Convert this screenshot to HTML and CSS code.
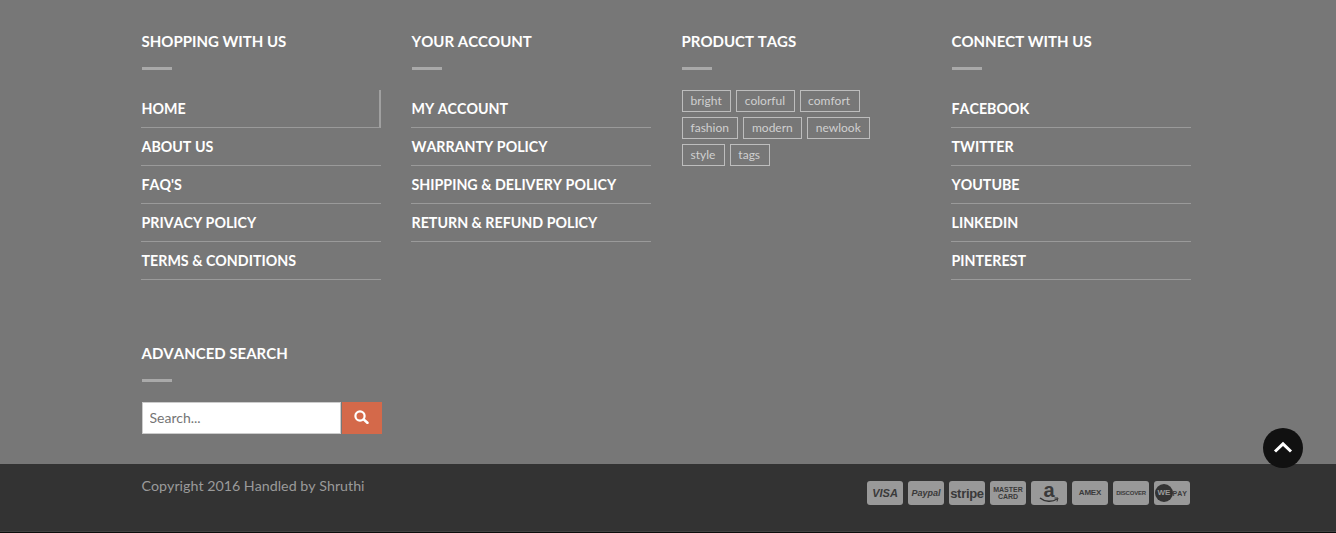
FILE: index.html
```html
<!DOCTYPE html>
<html lang="en">
<head>
<meta charset="utf-8">
<title>Footer</title>
<link rel="stylesheet" href="styles.css">
</head>
<body>
<footer class="footer">
  <div class="footer-main">
    <div class="columns">
      <section class="col">
        <h3 class="title">SHOPPING WITH US</h3>
        <ul class="links">
          <li class="active"><a href="#">HOME</a></li>
          <li><a href="#">ABOUT US</a></li>
          <li><a href="#">FAQ'S</a></li>
          <li><a href="#">PRIVACY POLICY</a></li>
          <li><a href="#">TERMS &amp; CONDITIONS</a></li>
        </ul>
      </section>
      <section class="col">
        <h3 class="title">YOUR ACCOUNT</h3>
        <ul class="links">
          <li><a href="#">MY ACCOUNT</a></li>
          <li><a href="#">WARRANTY POLICY</a></li>
          <li><a href="#">SHIPPING &amp; DELIVERY POLICY</a></li>
          <li><a href="#">RETURN &amp; REFUND POLICY</a></li>
        </ul>
      </section>
      <section class="col">
        <h3 class="title">PRODUCT TAGS</h3>
        <div class="tags">
          <a href="#">bright</a><a href="#">colorful</a><a href="#">comfort</a><a href="#">fashion</a><a href="#">modern</a><a href="#">newlook</a><a href="#">style</a><a href="#">tags</a>
        </div>
      </section>
      <section class="col">
        <h3 class="title">CONNECT WITH US</h3>
        <ul class="links">
          <li><a href="#">FACEBOOK</a></li>
          <li><a href="#">TWITTER</a></li>
          <li><a href="#">YOUTUBE</a></li>
          <li><a href="#">LINKEDIN</a></li>
          <li><a href="#">PINTEREST</a></li>
        </ul>
      </section>
    </div>
    <section class="col search-col">
      <h3 class="title">ADVANCED SEARCH</h3>
      <form class="search">
        <input class="search-input" type="text" placeholder="Search...">
        <button class="search-btn" type="button" aria-label="Search">
          <svg width="15" height="14" viewBox="0 0 15 14"><circle cx="6" cy="6" r="4.600" fill="none" stroke="#fff" stroke-width="2.200"/><path d="M9.600 9.400 L13.400 12.800" stroke="#fff" stroke-width="2.600" stroke-linecap="round"/></svg>
        </button>
      </form>
    </section>
  </div>
  <div class="footer-bottom">
    <p class="copyright">Copyright 2016 Handled by Shruthi</p>
    <div class="pay">
      <span class="card visa">VISA</span>
      <span class="card paypal">Paypal</span>
      <span class="card stripe">stripe</span>
      <span class="card master">MASTER<br>CARD</span>
      <span class="card amazon">a<svg class="smile" width="20" height="6" viewBox="0 0 20 6"><path d="M1 1 C6 5 13 5.500 18 2" fill="none" stroke="#333" stroke-width="1.500"/><path d="M15.500 1 L19 1 L18 4.500" fill="none" stroke="#333" stroke-width="1"/></svg></span>
      <span class="card amex">AMEX</span>
      <span class="card discover">DISCOVER</span>
      <span class="card wepay"><b class="we">WE</b>PAY</span>
    </div>
  </div>
</footer>
<a class="to-top" href="#" aria-label="Back to top">
  <svg width="20" height="12" viewBox="0 0 20 12"><path d="M2 10.500 L10 2.800 L18 10.500" fill="none" stroke="#fff" stroke-width="3"/></svg>
</a>
</body>
</html>
```
FILE: styles.css
```css
* { box-sizing: border-box; }
html, body { margin: 0; padding: 0; }
body {
  background: #777;
  font-family: Lato, "Liberation Sans", sans-serif;
  font-kerning: none;
  height: 533px;
  overflow: hidden;
}
a { color: inherit; text-decoration: none; }
.footer-main { padding: 32px 0 30px 141px; height: 464px; }
.columns { display: grid; grid-template-columns: repeat(4, 240px); column-gap: 30px; height: 280px; }
.col { width: 240px; }
.title {
  margin: 0 0 20px;
  height: 38px;
  padding-left: 0.5px;
  font-size: 15px;
  line-height: 18px;
  font-weight: 700;
  color: #fff;
  position: relative;
}
.title::after {
  content: "";
  position: absolute;
  left: 1px;
  top: 35px;
  width: 30px;
  height: 3px;
  background: #a9a9a9;
}
.links { list-style: none; margin: 0; padding: 0; }
.links li {
  height: 38px;
  padding-left: 0.5px;
  line-height: 38px;
  font-size: 14.25px;
  font-weight: 700;
  color: #fff;
  border-bottom: 1px solid #9a9a9a;
}
.links li.active { border-right: 2px solid #a0a0a0; }
.tags { display: flex; flex-wrap: wrap; gap: 5px; padding-left: 1px; width: 230px; }
.tags a {
  height: 22px;
  line-height: 20px;
  padding: 0 8.5px 0 7.5px;
  border: 1px solid #bdbdbd;
  color: #d0d0d0;
  font-size: 12px;
}
.search-col { margin-top: 32px; }
.search { display: flex; padding-left: 1px; height: 32px; width: 241px; }
.search-input {
  flex: none;
  width: 199px;
  height: 32px;
  border: 1px solid #ccc;
  background: #fff;
  padding: 0 7px 2px 6.5px;
  font: 14px Lato, "Liberation Sans", sans-serif;
  color: #666;
  outline: none;
}
.search-input::placeholder { color: #757575; opacity: 1; }
.search-btn {
  flex: none;
  margin-left: 1px;
  width: 40px;
  height: 32px;
  border: 0;
  padding: 0 1px 2px 0;
  background: #d4694a;
  display: flex;
  align-items: center;
  justify-content: center;
}
.footer-bottom {
  height: 69px;
  background: #333;
  border-bottom: 1px solid #0c0c0c;
  box-shadow: inset 0 -3px 0 -2px #424242;
  padding: 12px 146px 0 141.5px;
  display: flex;
  justify-content: space-between;
  align-items: flex-start;
}
.copyright { margin: 0; font-size: 14.25px; line-height: 20px; color: #9a9a9a; }
.pay { display: flex; gap: 5px; padding-top: 5px; }
.card {
  width: 36px;
  height: 24px;
  border-radius: 3px;
  background: #999;
  color: #3a3a3a;
  font-family: "Liberation Sans", sans-serif;
  font-weight: 700;
  display: flex;
  align-items: center;
  justify-content: center;
  text-align: center;
  font-size: 10px;
  line-height: 1;
  position: relative;
}
.visa { font-style: italic; font-size: 11px; }
.paypal { font-style: italic; font-size: 9px; }
.stripe { font-size: 13px; letter-spacing: -.3px; }
.master { font-size: 7px; line-height: 7px; }
.amazon { font-size: 20px; padding-bottom: 6px; }
.smile { position: absolute; left: 8px; bottom: 2px; }
.amex { font-size: 8px; letter-spacing: -.2px; }
.discover { font-size: 6px; letter-spacing: -.2px; }
.wepay { font-size: 7px; justify-content: flex-end; padding-right: 3px; }
.we {
  position: absolute;
  left: 1px;
  top: 3px;
  width: 18px;
  height: 18px;
  border-radius: 50%;
  background: #333;
  color: #999;
  font-size: 8px;
  line-height: 18px;
}
.to-top {
  position: fixed;
  left: 1263px;
  top: 428px;
  width: 40px;
  height: 40px;
  border-radius: 50%;
  background: #111;
  display: flex;
  align-items: center;
  justify-content: center;
  padding-bottom: 2px;
}
```
